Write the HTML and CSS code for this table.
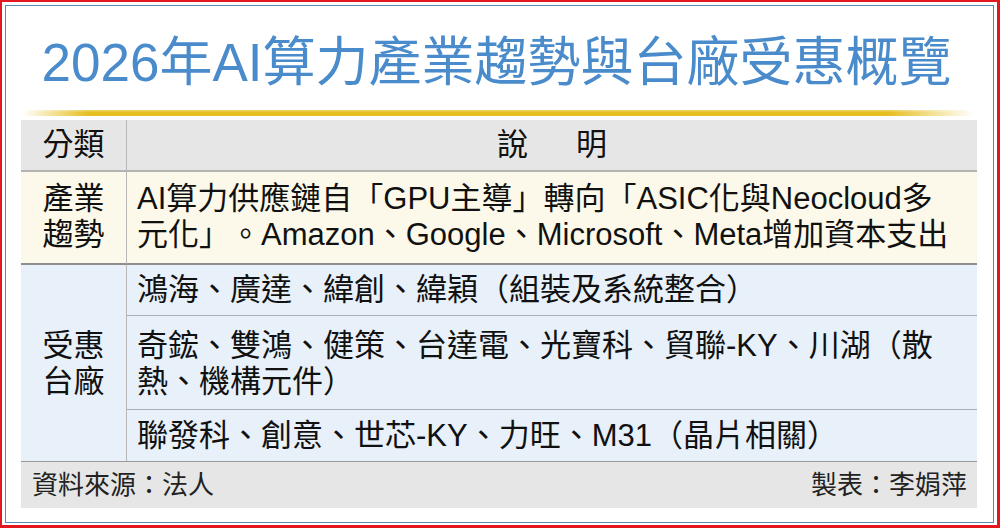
FILE: index.html
```html
<!DOCTYPE html>
<html lang="zh-Hant">
<head>
<meta charset="utf-8">
<title>2026年AI算力產業趨勢與台廠受惠概覽</title>
<link rel="stylesheet" href="styles.css">
</head>
<body>
<div class="page">
  <div class="frame">
    <h1 class="title">2026年AI算力產業趨勢與台廠受惠概覽</h1>
    <div class="gold"></div>
    <div class="table">
      <div class="cell head col1">分類</div>
      <div class="cell head col2"><span>說</span><span>明</span></div>

      <div class="cell trend col1">產業<br>趨勢</div>
      <div class="cell trend col2">AI算力供應鏈自「GPU主導」轉向「ASIC化與Neocloud多<br>元化」。Amazon、Google、Microsoft、Meta增加資本支出</div>

      <div class="cell group col1">受惠<br>台廠</div>
      <div class="cell sub sub1 col2">鴻海、廣達、緯創、緯穎（組裝及系統整合）</div>
      <div class="cell sub sub2 col2">奇鋐、雙鴻、健策、台達電、光寶科、貿聯-KY、川湖（散<br>熱、機構元件）</div>
      <div class="cell sub sub3 col2">聯發科、創意、世芯-KY、力旺、M31（晶片相關）</div>

      <div class="foot">
        <span>資料來源：法人</span>
        <span>製表：李娟萍</span>
      </div>
    </div>
  </div>
</div>
</body>
</html>
```

FILE: styles.css
```css
html, body {
  margin: 0;
  padding: 0;
  background: #ffffff;
}

body {
  font-family: "Liberation Sans", "Noto Sans CJK TC", sans-serif;
  color: #111111;
  text-spacing-trim: space-all;
}

.page {
  width: 1000px;
  height: 528px;
  box-sizing: border-box;
  border-style: solid;
  border-color: #e4161e;
  border-width: 2px 3px 3px 2px;
  padding: 3px 3px 2px 3px;
}

.frame {
  height: 100%;
  box-sizing: border-box;
  border: 1px solid #5b87b3;
  display: flex;
  flex-direction: column;
}

.title {
  margin: 0;
  height: 104px;
  box-sizing: border-box;
  padding-top: 10px;
  padding-right: 6px;
  display: flex;
  align-items: center;
  justify-content: center;
  font-size: 53px;
  font-weight: 400;
  line-height: 60px;
  color: #4a8bcb;
  white-space: nowrap;
}

.gold {
  height: 6px;
  margin: 0 20px 0 16px;
  background:
    linear-gradient(to bottom, rgba(255,255,255,0.35) 0, rgba(255,255,255,0) 40%),
    linear-gradient(to right, rgba(229,190,30,0) 0, #e5bf1f 7%, #e5bf1f 91%, rgba(229,190,30,0) 100%);
}

.table {
  margin: 4px 16px 0 15px;
  display: grid;
  grid-template-columns: 106px 1fr;
  font-size: 31px;
  line-height: 36px;
}

.cell {
  box-sizing: border-box;
}

.col1 {
  border-right: 1px solid #b7b7b7;
  text-align: center;
}

.col2 {
  padding-left: 10px;
}

.head {
  height: 52px;
  background: #e6e6e6;
  border-bottom: 2px solid #b3b3b3;
  display: flex;
  align-items: center;
  justify-content: center;
}

.head.col2 {
  gap: 48px;
  padding-left: 0;
}

.trend {
  height: 93px;
  background: #fcf9ea;
  border-bottom: 2px solid #8e8e8e;
  padding-top: 9px;
}

.group {
  grid-row: span 3;
  background: #e8f0f9;
  display: flex;
  align-items: center;
  justify-content: center;
  padding-top: 2px;
}

.sub {
  background: #e8f0f9;
  display: flex;
  align-items: center;
}

.sub1 {
  height: 51px;
  border-bottom: 1px solid #a6aeb7;
}

.sub2 {
  height: 94px;
  border-bottom: 1px solid #a6aeb7;
  padding-top: 2px;
}

.sub3 {
  height: 51px;
}

.foot {
  grid-column: 1 / -1;
  height: 47px;
  box-sizing: border-box;
  border-top: 1px solid #9a9a9a;
  background: #e6e6e6;
  display: flex;
  align-items: center;
  justify-content: space-between;
  padding: 0 10px 0 11px;
  font-size: 26px;
  line-height: 30px;
  color: #222222;
}
```
